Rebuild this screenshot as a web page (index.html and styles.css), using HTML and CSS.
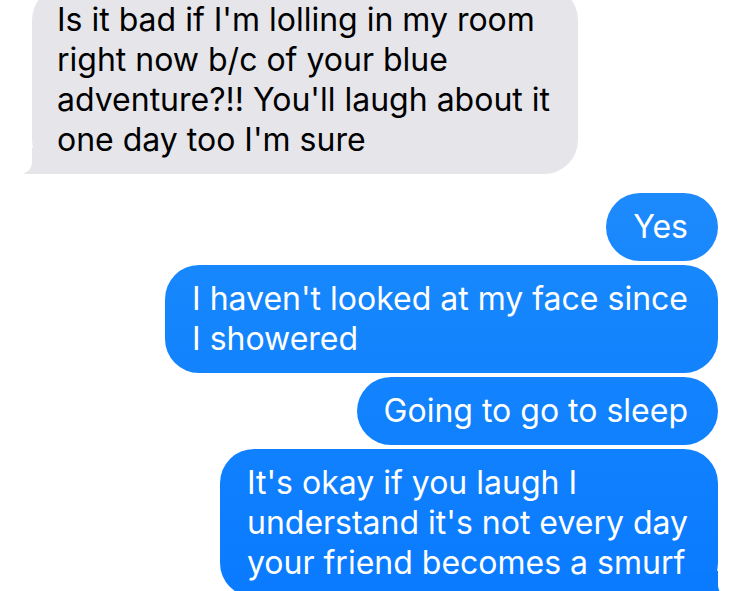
FILE: index.html
```html
<!DOCTYPE html>
<html lang="en">
<head>
  <meta charset="UTF-8">
  <meta name="viewport" content="width=device-width, initial-scale=1.0">
  <title>Messages</title>
  <link rel="stylesheet" href="styles.css">
</head>
<body>
  <div class="thread">
    <div class="bubble in tail">Is it bad if I'm lolling in my room<br>right now b/c of your blue<br>adventure?!! You'll laugh about it<br>one day too I'm sure</div>

    <div class="group">
      <div class="bubble out">Yes</div>
      <div class="bubble out">I haven't looked at my face since<br>I showered</div>
      <div class="bubble out">Going to go to sleep</div>
      <div class="bubble out tail">It's okay if you laugh I<br>understand it's not every day<br>your friend becomes a smurf</div>
    </div>
  </div>
</body>
</html>
```

FILE: styles.css
```css
body {
  margin: 0;
  background: white;
  font-family: 'Inter', 'Liberation Sans', sans-serif;
  overflow: hidden;
}
.thread {
  display: flex;
  flex-direction: column;
  margin-top: -14px;
  padding: 0 31px 0 32px;
}
.group {
  display: flex;
  flex-direction: column;
  align-items: flex-end;
  gap: 4px;
  margin-top: 19px;
}
.bubble {
  position: relative;
  z-index: 0;
  font-size: 32px;
  line-height: 40px;
  border-radius: 34px;
  white-space: nowrap;
}
.in {
  align-self: flex-start;
  background: #e5e5ea;
  color: black;
  padding: 14px 28px 14px 25px;
}
.out {
  background: linear-gradient(180deg, #2b93fb 0%, #1686fd 50%, #0a7bff 100%);
  background-attachment: fixed;
  color: white;
  padding: 14px 30px 14px 27px;
}

/* little tails at the corner of the last bubble */
.tail::before,
.tail::after {
  content: "";
  position: absolute;
  z-index: -1;
  bottom: 0;
  height: 26px;
}
.in.tail::before {
  left: -10px;
  width: 44px;
  background: #e5e5ea;
  border-bottom-left-radius: 2px;
}
.in.tail::after {
  left: -20px;
  width: 20px;
  background: white;
  border-bottom-right-radius: 12px;
}
.out.tail::before {
  right: -10px;
  width: 44px;
  background: #0a7bff;
  border-bottom-right-radius: 2px;
}
.out.tail::after {
  right: -20px;
  width: 20px;
  background: white;
  border-bottom-left-radius: 12px;
}
```
